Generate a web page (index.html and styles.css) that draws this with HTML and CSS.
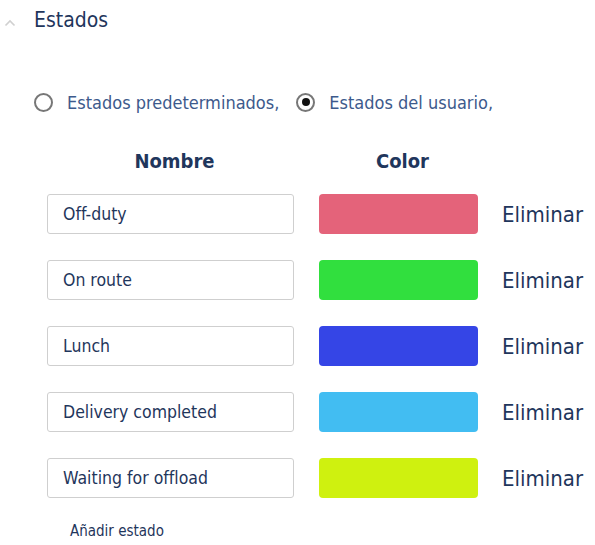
FILE: index.html
```html
<!DOCTYPE html>
<html lang="es">
<head>
<meta charset="utf-8">
<link rel="stylesheet" href="styles.css">
</head>
<body>
<div class="panel">
  <div class="section-head">
    <svg class="chevron" width="12" height="8" viewBox="0 0 12 8"><path d="M1.5 6.5 L6 2 L10.5 6.5" fill="none" stroke="#d0d0d0" stroke-width="1.6"/></svg>
    <span class="section-title">Estados</span>
  </div>
  <div class="radios">
    <label class="radio"><span class="dot"></span><span class="radio-text">Estados predeterminados,</span></label>
    <label class="radio checked"><span class="dot"></span><span class="radio-text">Estados del usuario,</span></label>
  </div>
  <div class="grid">
    <div class="col-head">Nombre</div>
    <div class="col-head">Color</div>
    <div></div>
    <div class="field">Off-duty</div>
    <div class="swatch" style="background:#e4637a"></div>
    <div class="del">Eliminar</div>
    <div class="field">On route</div>
    <div class="swatch" style="background:#31df3e"></div>
    <div class="del">Eliminar</div>
    <div class="field">Lunch</div>
    <div class="swatch" style="background:#3545e6"></div>
    <div class="del">Eliminar</div>
    <div class="field">Delivery completed</div>
    <div class="swatch" style="background:#42bdf2"></div>
    <div class="del">Eliminar</div>
    <div class="field">Waiting for offload</div>
    <div class="swatch" style="background:#cff10f"></div>
    <div class="del">Eliminar</div>
  </div>
  <div class="add">Añadir estado</div>
</div>
</body>
</html>
```
FILE: styles.css
```css
* { box-sizing: border-box; }
html, body { margin: 0; background: #fff; }
body {
  font-family: "DejaVu Sans Condensed", "DejaVu Sans", sans-serif;
  font-stretch: condensed;
  color: #1f365c;
}
.panel { width: 595px; height: 545px; overflow: hidden; }
.section-head {
  display: flex;
  align-items: center;
  height: 40px;
  padding-left: 4px;
}
.chevron { margin-top: 6px; }
.section-title {
  margin-left: 18px;
  font-size: 21px;
  color: #1f365c;
}
.radios {
  display: flex;
  align-items: center;
  margin-top: 46px;
  padding-left: 34px;
  height: 32px;
}
.radio { display: flex; align-items: center; margin-right: 17px; }
.dot {
  width: 19px; height: 19px;
  border: 2px solid #777;
  border-radius: 50%;
  position: relative;
  margin-right: 14px;
}
.checked .dot::after {
  content: "";
  position: absolute;
  left: 3.5px; top: 3.5px;
  width: 8px; height: 8px;
  background: #111;
  border-radius: 50%;
}
.radio-text { font-size: 18px; color: #3d5a8c; }
.grid {
  display: grid;
  grid-template-columns: 247px 159px auto;
  column-gap: 25px;
  row-gap: 26px;
  margin-top: 28px;
  padding-left: 47px;
  align-items: center;
}
.col-head {
  text-align: center;
  font-weight: bold;
  font-size: 20px;
  height: 36px;
  padding-top: 3px;
  margin-bottom: -14px;
  padding-left: 8px;
}
.field {
  height: 40px;
  border: 1.5px solid #cfcfcf;
  border-radius: 3px;
  padding-left: 15px;
  display: flex;
  align-items: center;
  font-size: 17.5px;
  color: #1f365c;
}
.swatch { height: 40px; border-radius: 4px; }
.del { font-size: 22px; color: #1f365c; margin-left: -1px; }
.add {
  margin-top: 24px;
  padding-left: 70px;
  font-size: 15px;
  color: #1f365c;
}
```
